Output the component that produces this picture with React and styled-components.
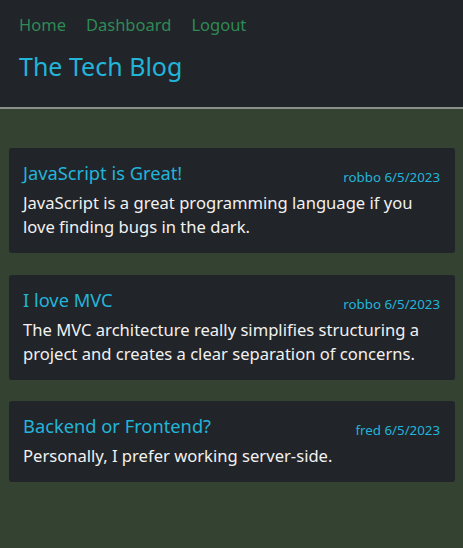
import styled, { createGlobalStyle } from "styled-components"

const GlobalStyle = createGlobalStyle`
  * { box-sizing: border-box; }
  body {
    margin: 0;
    background: #344232;
    font-family: "Noto Sans", "Open Sans", sans-serif;
    color: #f1f1f1;
  }
`

const posts = [
  {
    id: 1,
    title: "JavaScript is Great!",
    author: "robbo",
    date: "6/5/2023",
    text: "JavaScript is a great programming language if you love finding bugs in the dark.",
  },
  {
    id: 2,
    title: "I love MVC",
    author: "robbo",
    date: "6/5/2023",
    text: "The MVC architecture really simplifies structuring a project and creates a clear separation of concerns.",
  },
  {
    id: 3,
    title: "Backend or Frontend?",
    author: "fred",
    date: "6/5/2023",
    text: "Personally, I prefer working server-side.",
  },
]

function App() {
  return (
    <>
      <GlobalStyle />
      <Header>
        <Nav>
          <NavLink href="#">Home</NavLink>
          <NavLink href="#">Dashboard</NavLink>
          <NavLink href="#">Logout</NavLink>
        </Nav>
        <Title>The Tech Blog</Title>
      </Header>
      <Main>
        {posts.map((post) => (
          <Card key={post.id}>
            <CardHead>
              <PostTitle>{post.title}</PostTitle>
              <Meta>{post.author} {post.date}</Meta>
            </CardHead>
            <Body>{post.text}</Body>
          </Card>
        ))}
      </Main>
    </>
  )
}

const Header = styled.header`
  background: #212428;
  border-bottom: 2px solid #8a8f89;
  height: 109px;
  padding: 12px 19px 0;
`

const Nav = styled.nav`
  display: flex;
  gap: 20px;
`

const NavLink = styled.a`
  color: #2e8a56;
  font-size: 16.5px;
  line-height: 26px;
  text-decoration: none;
`

const Title = styled.h1`
  margin: 11px 0 0;
  color: #22b4d9;
  font-size: 25px;
  font-weight: 400;
  line-height: 34px;
`

const Main = styled.main`
  display: flex;
  flex-direction: column;
  gap: 21.5px;
  padding: 39px 8px 0 9px;
`

const Card = styled.article`
  background: #212428;
  border-radius: 3px;
  padding: 14px 15px 14px 14px;
`

const CardHead = styled.div`
  display: flex;
  justify-content: space-between;
  align-items: baseline;
  margin-bottom: 7px;
`

const PostTitle = styled.h2`
  margin: 0;
  color: #22b4d9;
  font-size: 18.3px;
  font-weight: 400;
  line-height: 22px;
`

const Meta = styled.span`
  color: #22b4d9;
  font-size: 13.3px;
  line-height: 16px;
  position: relative;
  top: 2px;
`

const Body = styled.p`
  margin: 0;
  font-size: 16.6px;
  line-height: 24px;
`

export default App
